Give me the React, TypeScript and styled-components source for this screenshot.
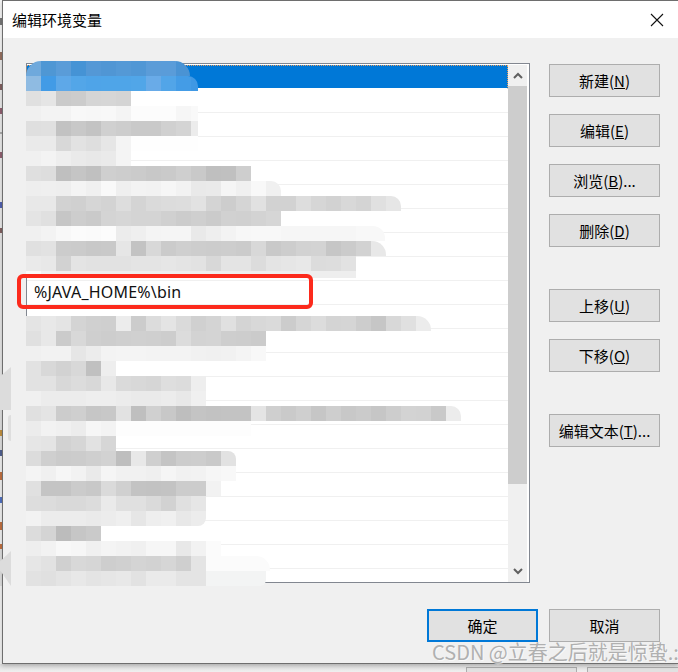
import { FC } from "react";
import styled, { createGlobalStyle } from "styled-components";

const FONT = `"Noto Sans CJK SC", "Noto Sans", sans-serif`;

type PatchRow = {
  width: number;
  tones: string;
  tail?: string;
  radius?: string;
  height?: number;
};

// blurred entries, one row of 15px squares each; tones are grey levels
const UPPER_PATCH: PatchRow[] = [
  { width: 105, tones: "e0 e5 ca cc d5 d6 d4" },
  { width: 172, tones: "f0 f3 f3 f8 f7 f8 f4 fc fc fc f6 f9", tail: "#fbfbfb" },
  { width: 172, tones: "df e0 c2 c8 c3 d0 cd c9 c9 d0 d4 ec" },
  { width: 172, tones: "ea ea d8 e2 de e6 f4 fe fe fe fe fe", tail: "#fff" },
  { width: 105, tones: "f0 f3 ee ea e8 ea f4" },
  { width: 225, tones: "df dd bf c5 c0 cf cd cb c8 ca cf c9 bf c0 ce" },
  { width: 255, tones: "ee ef ee f4 f0 f9 ef f3 f2 f6 f2 e9 ea f5 f0 f8 f0", radius: "0 10px 0 0" },
  { width: 375, tones: "e8 e8 d2 d0 d6 d3 dd d4 da dc dd e2 d4 cd d5 e1 d2 d2 dd d6 d2 d8 d4 e0 e6", radius: "0 10px 0 0" },
  { width: 255, tones: "e4 e0 c6 cd ca d4 d6 d4 d4 d0 cc cf cb d1 d0 d3 d6" },
  { width: 359, tones: "f0 f3 f8 fb fa fc ec ef f4 f5 f5 e9 ee f3 f7 f8 f8 f6 f6 f6 f6 f6 f8 f8", radius: "0 12px 0 0" },
  { width: 360, tones: "e0 e2 cc cb c8 c9 e6 c3 d8 cb cf cd cc cd cb d8 c9 cd d2 d3 c6 cb d2 e8", radius: "0 14px 0 0" },
  { width: 330, tones: "ea e8 d2 e4 e2 e2 e2 e4 e4 e6 e4 e2 d8 e4 e4 dc e4 e6 e8 dc dd e2" },
  { width: 330, tones: "fa f0 ee ee ee ee ee ee ee ee ee ee ee ee ee ee ee ee ee ee ee ee", height: 7 },
];

const LOWER_PATCH: PatchRow[] = [
  { width: 405, tones: "e4 e8 e4 d4 d0 cf ec cc dc e4 da d0 d4 e0 d4 d8 da cc d6 dc d4 d5 cd c6 d8 e0 ec", radius: "0 14px 0 0" },
  { width: 240, tones: "e0 e8 cb d8 cf cd cf d0 cf cd dc d3 d4 ce cd cb" },
  { width: 240, tones: "f0 f2 f2 e6 ec f3 f4 f4 f3 f3 f3 f1 f0 f1 f4 f8" },
  { width: 90, tones: "e2 d8 d2 d8 c0 ee" },
  { width: 180, tones: "e2 e2 d8 dc d8 e8 da d8 d6 de dc ee" },
  { width: 180, tones: "f0 ec ec ec ee ee ec ea ea ec e8 f0" },
  { width: 435, tones: "e0 e4 cc cf c6 c8 e2 bf d0 c8 be c4 c2 c3 c3 e4 cf ca cf c6 ce c8 cb c6 cd d3 d2 c9 ec", radius: "0 10px 0 0" },
  { width: 225, tones: "ec f2 f0 ec f6 f3", tail: "#fdfdfd" },
  { width: 90, tones: "e6 e4 d2 d6 e2 d6" },
  { width: 210, tones: "dc cf cb cc cf d2 be e8 cf c4 cc cd c9 e2", radius: "0 8px 0 0" },
  { width: 210, tones: "f4 f0 f6 f2 ea f5 f1 f1 ef f5 f1 f2 f6 f8" },
  { width: 195, tones: "e0 c4 c4 cb c8 da d0 c3 c2 c3 cc cc f2" },
  { width: 180, tones: "dd dc d9 d9 dc ea e0 e0 da d2 e0 e6" },
  { width: 180, tones: "f2 ec ec ec ea ec ef e6 ee f0 e8 ec", radius: "0 0 8px 0" },
  { width: 75, tones: "dc d4 bc c6 ca" },
  { width: 195, tones: "ee f2 f8 f6 f0 f4 f2 f0 f6 f6 e8 f2", tail: "#fbfbfb" },
  { width: 244, tones: "e6 e2 d0 d8 d6 ce d0 d4 d2 d6 cf e4", tail: "#fbfbfb", radius: "0 14px 0 0" },
  { width: 240, tones: "e2 e0 e4 e8 e4 e6 e8 e2 ea ea e4 e4", tail: "#f3f4f4", radius: "0 0 6px 0" },
];

const BLUE_TOP = ["#6fa9dc", "#4f97d4", "#5a9cd8", "#4593d5", "#5498d6", "#5096d4", "#5499d6", "#5097d5", "#5b9cd8", "#5a9cd9", "#4a93d4", "#4a93d4"];
const BLUE_BOTTOM = ["#8fbbe2", "#429be6", "#5ea8e8", "#53a6e8", "#4fa4e8", "#4fa5e8", "#4fa5e8", "#51a6e8", "#69abe8", "#52a5e8", "#449ce6", "#3f98e4"];

const SIDE_GROUPS = [
  [
    { label: "新建", key: "N" },
    { label: "编辑", key: "E" },
    { label: "浏览", key: "B", more: true },
    { label: "删除", key: "D" },
  ],
  [
    { label: "上移", key: "U" },
    { label: "下移", key: "O" },
  ],
  [{ label: "编辑文本", key: "T", more: true }],
];

const App: FC = () => {
  const rows = Array.from({ length: 21 }, (_, i) => i);

  return (
    <>
      <GlobalStyle />
      <Page>
        <Desktop>
          <BackdropEdge />
          <Dialog>
            <TitleBar>
              <Title>编辑环境变量</Title>
              <svg width="14" height="14" viewBox="0 0 14 14">
                <path d="M1 1 L13 13 M13 1 L1 13" stroke="#111" strokeWidth="1.1" fill="none" />
              </svg>
            </TitleBar>
            <Body>
              <Content>
                <ListBox>
                  <Rows>
                    {rows.map((i) => (
                      <ListRow key={i} $selected={i === 0}>
                        {i === 9 && "%JAVA_HOME%\\bin"}
                      </ListRow>
                    ))}
                  </Rows>
                  <ScrollBar>
                    <ScrollArrow>
                      <svg width="10" height="7" viewBox="0 0 10 7">
                        <path d="M1 6 L5 2 L9 6" stroke="#606060" strokeWidth="2" fill="none" />
                      </svg>
                    </ScrollArrow>
                    <ScrollThumb />
                    <ScrollArrow>
                      <svg width="10" height="7" viewBox="0 0 10 7">
                        <path d="M1 1 L5 5 L9 1" stroke="#606060" strokeWidth="2" fill="none" />
                      </svg>
                    </ScrollArrow>
                  </ScrollBar>
                  <Mosaic>
                    <BlueRow $width={164} $radius="22px 22px 0 0">
                      {BLUE_TOP.map((c, i) => (
                        <Square key={i} $color={c} />
                      ))}
                    </BlueRow>
                    <BlueRow $width={172} $radius="0 10px 0 0">
                      {BLUE_BOTTOM.map((c, i) => (
                        <Square key={i} $color={c} />
                      ))}
                    </BlueRow>
                    {UPPER_PATCH.map((row, i) => (
                      <PatchLine key={i} row={row} />
                    ))}
                    <MosaicGap />
                    {LOWER_PATCH.map((row, i) => (
                      <PatchLine key={i} row={row} />
                    ))}
                  </Mosaic>
                  <Highlight />
                </ListBox>
                <SideColumn>
                  {SIDE_GROUPS.map((group, i) => (
                    <SideGroup key={i}>
                      {group.map((b) => (
                        <Button key={b.key}>
                          {b.label}(<u>{b.key}</u>){b.more && "..."}
                        </Button>
                      ))}
                    </SideGroup>
                  ))}
                </SideColumn>
              </Content>
              <Footer>
                <Button $primary>确定</Button>
                <Button>取消</Button>
              </Footer>
            </Body>
          </Dialog>
          <SmudgeUpper />
          <SmudgeSliver />
          <SmudgeLower />
        </Desktop>
        <BackdropBar>
          <BackdropButton />
          <BackdropButton />
        </BackdropBar>
        <Watermark>CSDN @立春之后就是惊蛰.:</Watermark>
      </Page>
    </>
  );
};

const PatchLine: FC<{ row: PatchRow }> = ({ row }) => (
  <PatchRowBox $width={row.width} $tail={row.tail} $radius={row.radius} $height={row.height}>
    {row.tones.split(" ").map((t, i) => (
      <Square key={i} $color={`#${t}${t}${t}`} />
    ))}
  </PatchRowBox>
);

const GlobalStyle = createGlobalStyle`
  html, body {
    margin: 0;
    padding: 0;
    background: #fff;
  }
`;

const Page = styled.div`
  position: relative;
  display: flex;
  flex-direction: column;
  width: 678px;
  height: 672px;
  overflow: hidden;
  font-family: ${FONT};
  color: #000;
`;

const Desktop = styled.div`
  position: relative;
  display: flex;
  height: 664px;
`;

// edge of the window lying behind the dialog, only scraps of its text show
const BackdropEdge = styled.div`
  flex: 0 0 2px;
  background: linear-gradient(
    to bottom,
    #f4f4f4 0 18px,
    #777 18px 25px,
    #f4f4f4 25px 52px,
    #967060 52px 60px,
    #e8e8e8 60px 84px,
    #806060 84px 90px,
    #e8e8e8 90px 108px,
    #906070 108px 114px,
    #e8e8e8 114px 132px,
    #aaa 132px 134px,
    #e8e8e8 134px 152px,
    #906070 152px 158px,
    #e8e8e8 158px 202px,
    #5060b0 202px 208px,
    #e8e8e8 208px 228px,
    #806060 228px 233px,
    #e4e4e4 233px 404px,
    #3050b0 404px 409px,
    #ddd 409px 430px,
    #c09040 430px 436px,
    #ddd 436px 450px,
    #506090 450px 456px,
    #eee 456px 472px,
    #c07040 472px 480px,
    #eee 480px 497px,
    #5070c0 497px 503px,
    #eee 503px 522px,
    #c07040 522px 530px,
    #eee 530px 544px,
    #c07040 544px 549px,
    #ddd 549px 586px,
    #f0f0f0 586px
  );
`;

const Dialog = styled.div`
  flex: 1;
  display: flex;
  flex-direction: column;
  min-width: 0;
  border: 1px solid #6e6e6e;
  border-right: none;
  box-shadow: 0 2px 4px rgba(0, 0, 0, 0.2);
`;

const TitleBar = styled.div`
  display: flex;
  align-items: center;
  justify-content: space-between;
  flex: 0 0 37px;
  padding: 0 14px 0 9px;
  background: #fff;
`;

const Title = styled.span`
  font-size: 15px;
  line-height: 37px;
`;

const Body = styled.div`
  flex: 1;
  display: flex;
  flex-direction: column;
  background: #f0f0f0;
  padding: 25px 18px 0 23px;
`;

const Content = styled.div`
  display: flex;
  align-items: flex-start;
`;

const ListBox = styled.div`
  position: relative;
  display: flex;
  box-sizing: border-box;
  width: 504px;
  height: 520px;
  padding-top: 1px;
  border: 1px solid #828790;
  background: #fff;
`;

const Rows = styled.div`
  flex: 0 0 481px;
  overflow: hidden;
`;

const ListRow = styled.div<{ $selected?: boolean }>`
  box-sizing: border-box;
  height: 24px;
  padding-left: 7px;
  font-family: "Noto Sans", sans-serif;
  font-size: 16px;
  letter-spacing: 0.2px;
  line-height: 23px;
  color: #111;
  border-bottom: 1px solid ${(p) => (p.$selected ? "#fff" : "#f0f0f0")};
  background: ${(p) => (p.$selected ? "#0078d7" : "#fff")};
  ${(p) => p.$selected && "border-right: 1px dotted #e8a060; border-top: 1px dotted #e8a060;"}
`;

const ScrollBar = styled.div`
  display: flex;
  flex-direction: column;
  flex: 0 0 19px;
  background: #f0f0f0;
`;

const ScrollArrow = styled.div`
  display: flex;
  align-items: center;
  justify-content: center;
  flex: 0 0 21px;
`;

const ScrollThumb = styled.div`
  flex: 0 0 398px;
  background: #cdcdcd;
  margin-bottom: auto;
`;

const Mosaic = styled.div`
  position: absolute;
  top: -3px;
  left: -1px;
  display: flex;
  flex-direction: column;
  pointer-events: none;
`;

const MosaicGap = styled.div`
  height: 38px;
`;

const BlueRow = styled.div<{ $width: number; $radius: string }>`
  display: flex;
  width: ${(p) => p.$width}px;
  height: 15px;
  overflow: hidden;
  border-radius: ${(p) => p.$radius};
`;

const PatchRowBox = styled.div<{ $width: number; $tail?: string; $radius?: string; $height?: number }>`
  display: flex;
  width: ${(p) => p.$width}px;
  height: ${(p) => p.$height ?? 15}px;
  overflow: hidden;
  background: ${(p) => p.$tail ?? "transparent"};
  border-radius: ${(p) => p.$radius ?? "0"};
`;

const Square = styled.div<{ $color: string }>`
  flex: 0 0 15px;
  height: 15px;
  background: ${(p) => p.$color};
`;

const Highlight = styled.div`
  position: absolute;
  top: 210px;
  left: -10px;
  width: 296px;
  height: 35px;
  box-sizing: border-box;
  border: 4px solid #fc2a1c;
  border-radius: 6px;
`;

const SideColumn = styled.div`
  display: flex;
  flex-direction: column;
  gap: 42px;
  margin: 1px 0 0 19px;
`;

const SideGroup = styled.div`
  display: flex;
  flex-direction: column;
  gap: 17px;
`;

const Button = styled.button<{ $primary?: boolean }>`
  box-sizing: border-box;
  width: 111px;
  height: 33px;
  padding: 0;
  background: #e1e1e1;
  border: ${(p) => (p.$primary ? "2px solid #0078d7" : "1px solid #adadad")};
  font-family: ${FONT};
  font-size: 15px;
  color: #000;
  white-space: nowrap;
`;

const Footer = styled.div`
  display: flex;
  justify-content: flex-end;
  gap: 11px;
  margin-top: 26px;
`;

const SmudgeUpper = styled.div`
  position: absolute;
  left: 0;
  top: 367px;
  width: 11px;
  height: 43px;
  background: #dcdcdc;
  clip-path: polygon(0 22%, 100% 0, 100% 100%, 0 100%);
`;

const SmudgeSliver = styled.div`
  position: absolute;
  left: 8px;
  top: 415px;
  width: 3px;
  height: 26px;
  background: #dedede;
  border-radius: 3px 0 0 3px;
`;

const SmudgeLower = styled.div`
  position: absolute;
  left: 0;
  top: 551px;
  width: 11px;
  height: 35px;
  background: #dcdcdc;
  clip-path: polygon(100% 0, 100% 100%, 0 55%, 0 30%);
`;

const BackdropBar = styled.div`
  display: flex;
  gap: 10px;
  height: 8px;
  padding: 3px 0 0 466px;
  box-sizing: border-box;
  background: linear-gradient(to bottom, #dcdcdc, #efefef);
`;

const BackdropButton = styled.div`
  flex: 0 0 111px;
  box-sizing: border-box;
  height: 30px;
  background: #e1e1e1;
  border: 1px solid #adadad;
`;

const Watermark = styled.div`
  position: absolute;
  top: 638px;
  left: 432px;
  font-size: 20px;
  line-height: 28px;
  white-space: nowrap;
  color: #b0b0b0;
  text-shadow: 1px 1px 0 rgba(255, 255, 255, 0.6);
`;

export default App;
